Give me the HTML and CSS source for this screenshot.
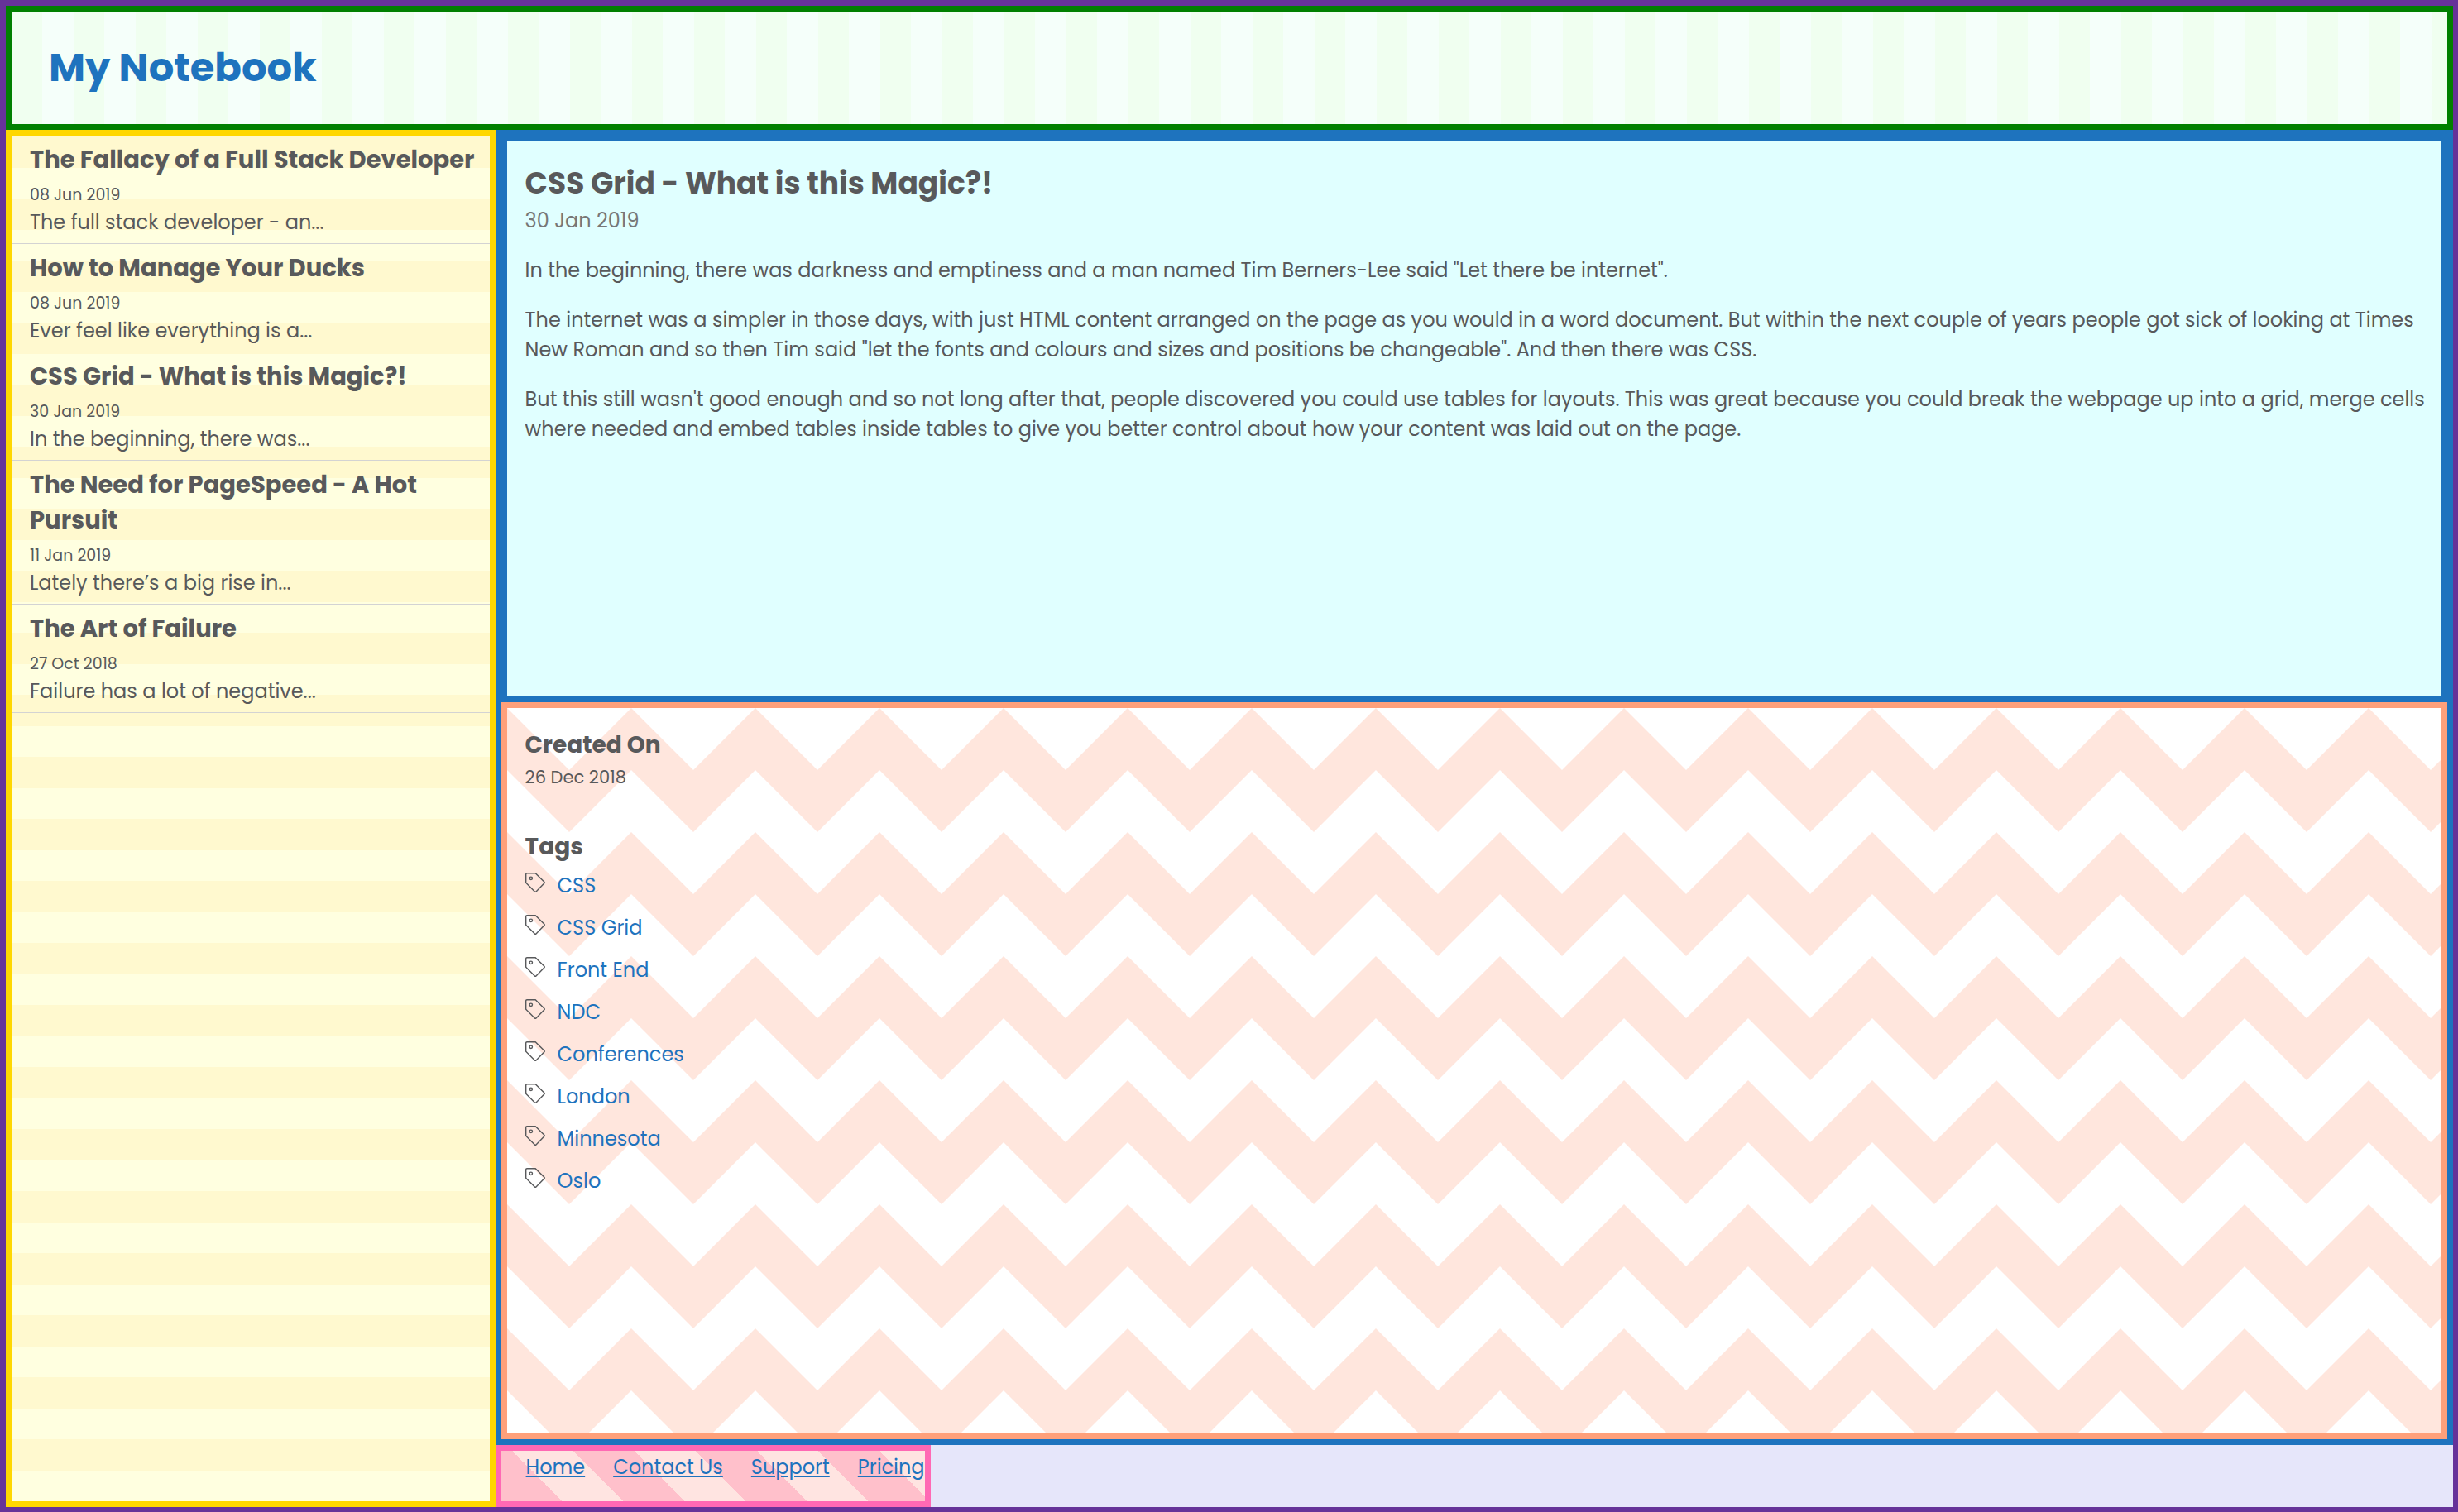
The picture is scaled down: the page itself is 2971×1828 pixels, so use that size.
FILE: index.html
```html
<!DOCTYPE html>
<html lang="en">
<head>
<meta charset="utf-8">
<meta name="viewport" content="width=device-width, initial-scale=1">
<title>My Notebook</title>
<link rel="stylesheet" href="styles.css">
</head>
<body>
<svg class="sprite" aria-hidden="true">
  <symbol id="tag" viewBox="0 0 24 24">
    <path d="M2 .7H12.200L22.900 11.200Q23.700 12 22.900 12.800L13 22.900Q12.200 23.700 11.400 22.900L.7 12.200V2Q.7 .7 2 .7Z"/>
    <circle cx="6.800" cy="6.800" r="1.700"/>
  </symbol>
</svg>
<div class="page">
  <header class="header">
    <h1 class="brand">My Notebook</h1>
  </header>
  <aside class="notes">
    <article class="note">
      <h3 class="note-title">The Fallacy of a Full Stack Developer</h3>
      <time class="note-date">08 Jun 2019</time>
      <p class="note-excerpt">The full stack developer - an...</p>
    </article>
    <article class="note">
      <h3 class="note-title">How to Manage Your Ducks</h3>
      <time class="note-date">08 Jun 2019</time>
      <p class="note-excerpt">Ever feel like everything is a...</p>
    </article>
    <article class="note">
      <h3 class="note-title">CSS Grid - What is this Magic?!</h3>
      <time class="note-date">30 Jan 2019</time>
      <p class="note-excerpt">In the beginning, there was...</p>
    </article>
    <article class="note">
      <h3 class="note-title">The Need for PageSpeed - A Hot Pursuit</h3>
      <time class="note-date">11 Jan 2019</time>
      <p class="note-excerpt">Lately there’s a big rise in...</p>
    </article>
    <article class="note">
      <h3 class="note-title">The Art of Failure</h3>
      <time class="note-date">27 Oct 2018</time>
      <p class="note-excerpt">Failure has a lot of negative...</p>
    </article>
  </aside>
  <main class="main">
    <article class="content">
      <h2 class="content-title">CSS Grid - What is this Magic?!</h2>
      <time class="content-date">30 Jan 2019</time>
      <p>In the beginning, there was darkness and emptiness and a man named Tim Berners-Lee said "Let there be internet".</p>
      <p>The internet was a simpler in those days, with just HTML content arranged on the page as you would in a word document. But within the next couple of years people got sick of looking at Times New Roman and so then Tim said "let the fonts and colours and sizes and positions be changeable". And then there was CSS.</p>
      <p>But this still wasn't good enough and so not long after that, people discovered you could use tables for layouts. This was great because you could break the webpage up into a grid, merge cells where needed and embed tables inside tables to give you better control about how your content was laid out on the page.</p>
    </article>
    <aside class="meta">
      <h3 class="meta-title">Created On</h3>
      <time class="meta-date">26 Dec 2018</time>
      <h3 class="meta-title">Tags</h3>
      <ul class="tags">
        <li><svg class="icon" aria-hidden="true"><use href="#tag"/></svg><a href="#">CSS</a></li>
        <li><svg class="icon" aria-hidden="true"><use href="#tag"/></svg><a href="#">CSS Grid</a></li>
        <li><svg class="icon" aria-hidden="true"><use href="#tag"/></svg><a href="#">Front End</a></li>
        <li><svg class="icon" aria-hidden="true"><use href="#tag"/></svg><a href="#">NDC</a></li>
        <li><svg class="icon" aria-hidden="true"><use href="#tag"/></svg><a href="#">Conferences</a></li>
        <li><svg class="icon" aria-hidden="true"><use href="#tag"/></svg><a href="#">London</a></li>
        <li><svg class="icon" aria-hidden="true"><use href="#tag"/></svg><a href="#">Minnesota</a></li>
        <li><svg class="icon" aria-hidden="true"><use href="#tag"/></svg><a href="#">Oslo</a></li>
      </ul>
    </aside>
  </main>
  <footer class="footer">
    <nav class="links">
      <a href="#">Home</a>
      <a href="#">Contact Us</a>
      <a href="#">Support</a>
      <a href="#">Pricing</a>
    </nav>
  </footer>
</div>
</body>
</html>
```

FILE: styles.css
```css
* {
  box-sizing: border-box;
  margin: 0;
  padding: 0;
}

body {
  font-family: Poppins, Inter, sans-serif;
  font-size: 24px;
  line-height: 36px;
  color: #58595b;
}

a {
  color: #1e73be;
}

.sprite {
  display: none;
}

.page {
  display: grid;
  grid-template-columns: minmax(0, 1fr) minmax(0, 4fr);
  grid-template-rows: 150px 1fr 75px;
  min-height: 100vh;
  border: solid #663399;
  border-width: 7px 6px 6px 7px;
  background: #e6e6fa;
}

.header {
  grid-column: 1 / -1;
  display: flex;
  align-items: center;
  padding: 0 45px;
  border: 7px solid #008000;
  background: linear-gradient(90deg, #f0fff0 50%, #f5fffa 50%) 0 0 / 75px 75px;
}

.brand {
  font-size: 48px;
  line-height: 72px;
  color: #1e73be;
}

.notes {
  grid-row: 2 / 4;
  border: 7px solid #ffd700;
  background: linear-gradient(0deg, #ffffe0 50%, #fff9cf 50%) 0 100% / 75px 75px;
}

.note {
  padding: 8px 15px 7px 22px;
  border-bottom: 1px solid #d3d3d3;
}

.note-title {
  font-size: 29px;
  line-height: 43px;
}

.note-date {
  display: block;
  margin-top: 5px;
  font-size: 19px;
  line-height: 31px;
}

.main {
  display: grid;
  grid-template-rows: 10fr 13fr;
  border: 7px solid #1e73be;
}

.content {
  padding: 26px 4px 24px 22px;
  border: 7px solid #1e73be;
  background: #e0ffff;
}

.content-title {
  font-size: 36px;
  line-height: 50px;
}

.content-date {
  display: block;
  margin-top: 2px;
  color: #777;
}

.content p {
  margin-top: 24px;
}

.meta {
  padding: 23px 22px;
  border: 7px solid #ffa07a;
  background: #fff url("data:image/svg+xml,%3Csvg xmlns='http://www.w3.org/2000/svg' width='150' height='150'%3E%3Cpath fill='%23ffe6dd' d='M0 0 75 75 150 0V75L75 150 0 75Z'/%3E%3C/svg%3E");
}

.meta-title {
  font-size: 28px;
  line-height: 43px;
}

.meta-date {
  display: block;
  margin-bottom: 44px;
  font-size: 21px;
}

.tags {
  list-style: none;
}

.tags li {
  display: flex;
  align-items: center;
  gap: 15px;
  line-height: 51px;
}

.tags a {
  text-decoration: none;
}

.icon {
  width: 24px;
  height: 24px;
  margin-bottom: 8px;
  fill: none;
  stroke: #58595b;
  stroke-width: 1.4;
}

.footer {
  display: flex;
}

.links {
  display: flex;
  gap: 34px;
  padding: 2px 0 0 30px;
  border: 7px solid #ff69b4;
  background: linear-gradient(45deg, #ffc0cb 25%, #ffe4e1 25% 50%, #ffc0cb 50% 75%, #ffe4e1 75%) 0 100% / 148px 148px;
}
```
